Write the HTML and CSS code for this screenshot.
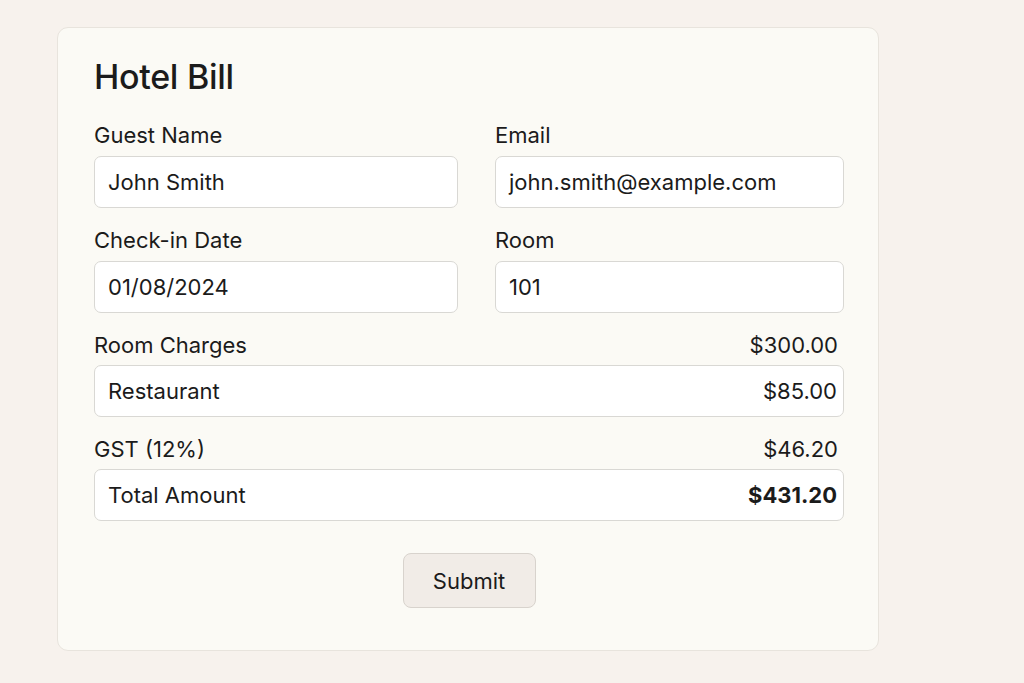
FILE: index.html
```html
<!DOCTYPE html>
<html lang="en">
<head>
  <meta charset="UTF-8">
  <meta name="viewport" content="width=device-width, initial-scale=1.0">
  <title>Hotel Bill</title>
  <link rel="stylesheet" href="styles.css">
</head>
<body>
  <div class="card">
    <h1>Hotel Bill</h1>

    <form class="bill-form">
      <div class="grid">
        <div class="field">
          <label>Guest Name</label>
          <div class="box">John Smith</div>
        </div>
        <div class="field">
          <label>Email</label>
          <div class="box">john.smith@example.com</div>
        </div>
        <div class="field">
          <label>Check-in Date</label>
          <div class="box">01/08/2024</div>
        </div>
        <div class="field">
          <label>Room</label>
          <div class="box">101</div>
        </div>
      </div>

      <!-- charges -->
      <div class="line plain">
        <span>Room Charges</span>
        <span>$300.00</span>
      </div>
      <div class="line box">
        <span>Restaurant</span>
        <span>$85.00</span>
      </div>
      <div class="line plain">
        <span>GST (12%)</span>
        <span>$46.20</span>
      </div>
      <div class="line box">
        <span>Total Amount</span>
        <span class="total">$431.20</span>
      </div>

      <div class="actions">
        <button type="button" class="btn">Submit</button>
      </div>
    </form>
  </div>
</body>
</html>
```

FILE: styles.css
```css
body {
  margin: 0;
  padding: 27px 0 0 57px;
  background-color: #f7f2ed;
  font-family: Inter, "Noto Sans", sans-serif;
  color: #1b1b1b;
}

.card {
  width: 750px;
  padding: 29px 34px 42px 36px;
  background-color: #fbfaf5;
  border: 1px solid #e8e4dd;
  border-radius: 11px;
}

h1 {
  margin: 0 0 25px 0;
  font-size: 34px;
  font-weight: 500;
  line-height: 40px;
  letter-spacing: -0.3px;
}

.grid {
  display: grid;
  grid-template-columns: 364px 349px;
  column-gap: 37px;
  row-gap: 19px;
}

.field {
  display: flex;
  flex-direction: column;
  gap: 8px;
}

label {
  font-size: 22px;
  line-height: 26px;
}

.box {
  box-sizing: border-box;
  height: 52px;
  padding: 0 6px 0 13px;
  background-color: #fff;
  border: 1px solid #d9d8d4;
  border-radius: 7px;
  font-size: 22px;
  line-height: 50px;
}

.line {
  display: flex;
  justify-content: space-between;
  align-items: center;
  font-size: 22px;
}

.line.plain {
  padding-right: 6px;
  line-height: 26px;
  margin: 19px 0 7px 0;
}

.total {
  font-weight: 700;
}

.actions {
  display: flex;
  justify-content: center;
  margin-top: 32px;
}

.btn {
  width: 133px;
  height: 55px;
  background-color: #f1ece7;
  border: 1px solid #d8d3cd;
  border-radius: 8px;
  font-family: Inter, "Noto Sans", sans-serif;
  font-size: 22px;
  color: #1b1b1b;
  cursor: pointer;
}
```
